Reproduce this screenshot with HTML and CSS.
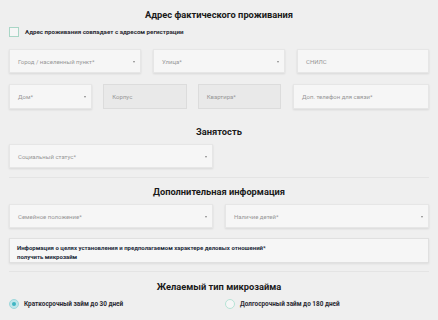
FILE: index.html
```html
<!DOCTYPE html>
<html lang="ru">
<head>
<meta charset="utf-8">
<link rel="stylesheet" href="styles.css">
</head>
<body>
<div class="page">
  <h2 class="title t1">Адрес фактического проживания</h2>
  <label class="check">
    <span class="box"></span>
    <span class="check-label">Адрес проживания совпадает с адресом регистрации</span>
  </label>
  <div class="row3">
    <div class="field select">Город / населенный пункт*</div>
    <div class="field select">Улица*</div>
    <div class="field">СНИЛС</div>
  </div>
  <div class="row-addr">
    <div class="sub3">
      <div class="field select">Дом*</div>
      <div class="field disabled">Корпус</div>
      <div class="field disabled">Квартира*</div>
    </div>
    <div class="field">Доп. телефон для связи*</div>
  </div>

  <h2 class="title t2">Занятость</h2>
  <div class="row2">
    <div class="field select">Социальный статус*</div>
  </div>
  <div class="divider d1"></div>

  <h2 class="title t3">Дополнительная информация</h2>
  <div class="row2">
    <div class="field select">Семейное положение*</div>
    <div class="field select">Наличие детей*</div>
  </div>
  <div class="info">Информация о целях установления и предполагаемом характере деловых отношений*<br>получить микрозайм</div>
  <div class="divider d2"></div>

  <h2 class="title t4">Желаемый тип микрозайма</h2>
  <div class="radios">
    <label class="radio"><span class="dot on"></span>Краткосрочный займ до 30 дней</label>
    <label class="radio"><span class="dot"></span>Долгосрочный займ до 180 дней</label>
  </div>
</div>
</body>
</html>
```

FILE: styles.css
```css
* { box-sizing: border-box; }
html, body { margin: 0; padding: 0; }
body {
  background: #efefef;
  font-family: Roboto, "Liberation Sans", Arial, sans-serif;
  color: #222;
  width: 438px;
  height: 320px;
  overflow: hidden;
}
.page { padding: 0 9px; }

.title {
  margin: 0;
  text-align: center;
  font-size: 9.3px;
  font-weight: 700;
  line-height: 14px;
  color: #1a1a1a;
}
.t1 { padding-top: 8px; }

.check {
  display: flex;
  align-items: center;
  margin-top: 5px;
  height: 10px;
}
.box {
  width: 10px;
  height: 10px;
  border: 1px solid #a9d6c6;
  background: #f6f6f6;
  margin-right: 6px;
  flex: none;
}
.check-label {
  font-size: 6.2px;
  font-weight: 700;
  color: #2b2b33;
}

.field {
  position: relative;
  height: 24px;
  background: #f6f6f6;
  border: 1px solid #e6e6e6;
  box-shadow: 0 1px 2px rgba(0,0,0,0.10);
  font-size: 6px;
  color: #979797;
  display: flex;
  align-items: center;
  padding-left: 8px;
}
.field.disabled {
  background: #e9e9e9;
  border-color: #dcdcdc;
  box-shadow: none;
}
.select::after {
  content: "";
  position: absolute;
  right: 5px;
  top: 11px;
  border-left: 1.5px solid transparent;
  border-right: 1.5px solid transparent;
  border-top: 2px solid #888;
}

.row3 {
  display: grid;
  grid-template-columns: 1fr 1fr 1fr;
  gap: 12px;
  margin-top: 12px;
}
.row-addr {
  display: grid;
  grid-template-columns: 2fr 1fr;
  column-gap: 12px;
  margin-top: 11px;
}
.row-addr .field { height: 25px; }
.sub3 {
  display: grid;
  grid-template-columns: 1fr 1fr 1fr;
  gap: 11px;
}

.t2 { margin-top: 16px; }
.row2 {
  display: grid;
  grid-template-columns: 1fr 1fr;
  gap: 12px;
  margin-top: 5px;
}
.row2 .field { height: 24px; }

.divider {
  height: 1px;
  background: #e4e4e4;
}
.d1 { margin-top: 9px; }
.t3 { margin-top: 7px; }

.info {
  margin-top: 10px;
  height: 25px;
  background: #f6f6f6;
  border: 1px solid #e0e0e0;
  box-shadow: 0 1px 2px rgba(0,0,0,0.08);
  font-size: 6px;
  font-weight: 700;
  line-height: 8.5px;
  color: #232a3a;
  padding: 5px 0 0 7px;
}
.d2 { margin-top: 8px; }
.t4 { margin-top: 8px; }

.radios {
  display: grid;
  grid-template-columns: 1fr 1fr;
  gap: 12px;
  margin-top: 4px;
}
.radio {
  display: flex;
  align-items: center;
  font-size: 6.4px;
  font-weight: 700;
  color: #2b2b33;
  height: 12px;
}
.dot {
  width: 10px;
  height: 10px;
  border-radius: 50%;
  border: 1px solid #b7e3d6;
  background: #f6f6f6;
  margin: 0 5px 0 0;
  flex: none;
  position: relative;
}
.dot.on {
  background: #bfe6ea;
  border-color: #9fd8dc;
}
.dot.on::after {
  content: "";
  position: absolute;
  left: 2px;
  top: 2px;
  width: 4px;
  height: 4px;
  border-radius: 50%;
  background: #3fb5c2;
}
```
